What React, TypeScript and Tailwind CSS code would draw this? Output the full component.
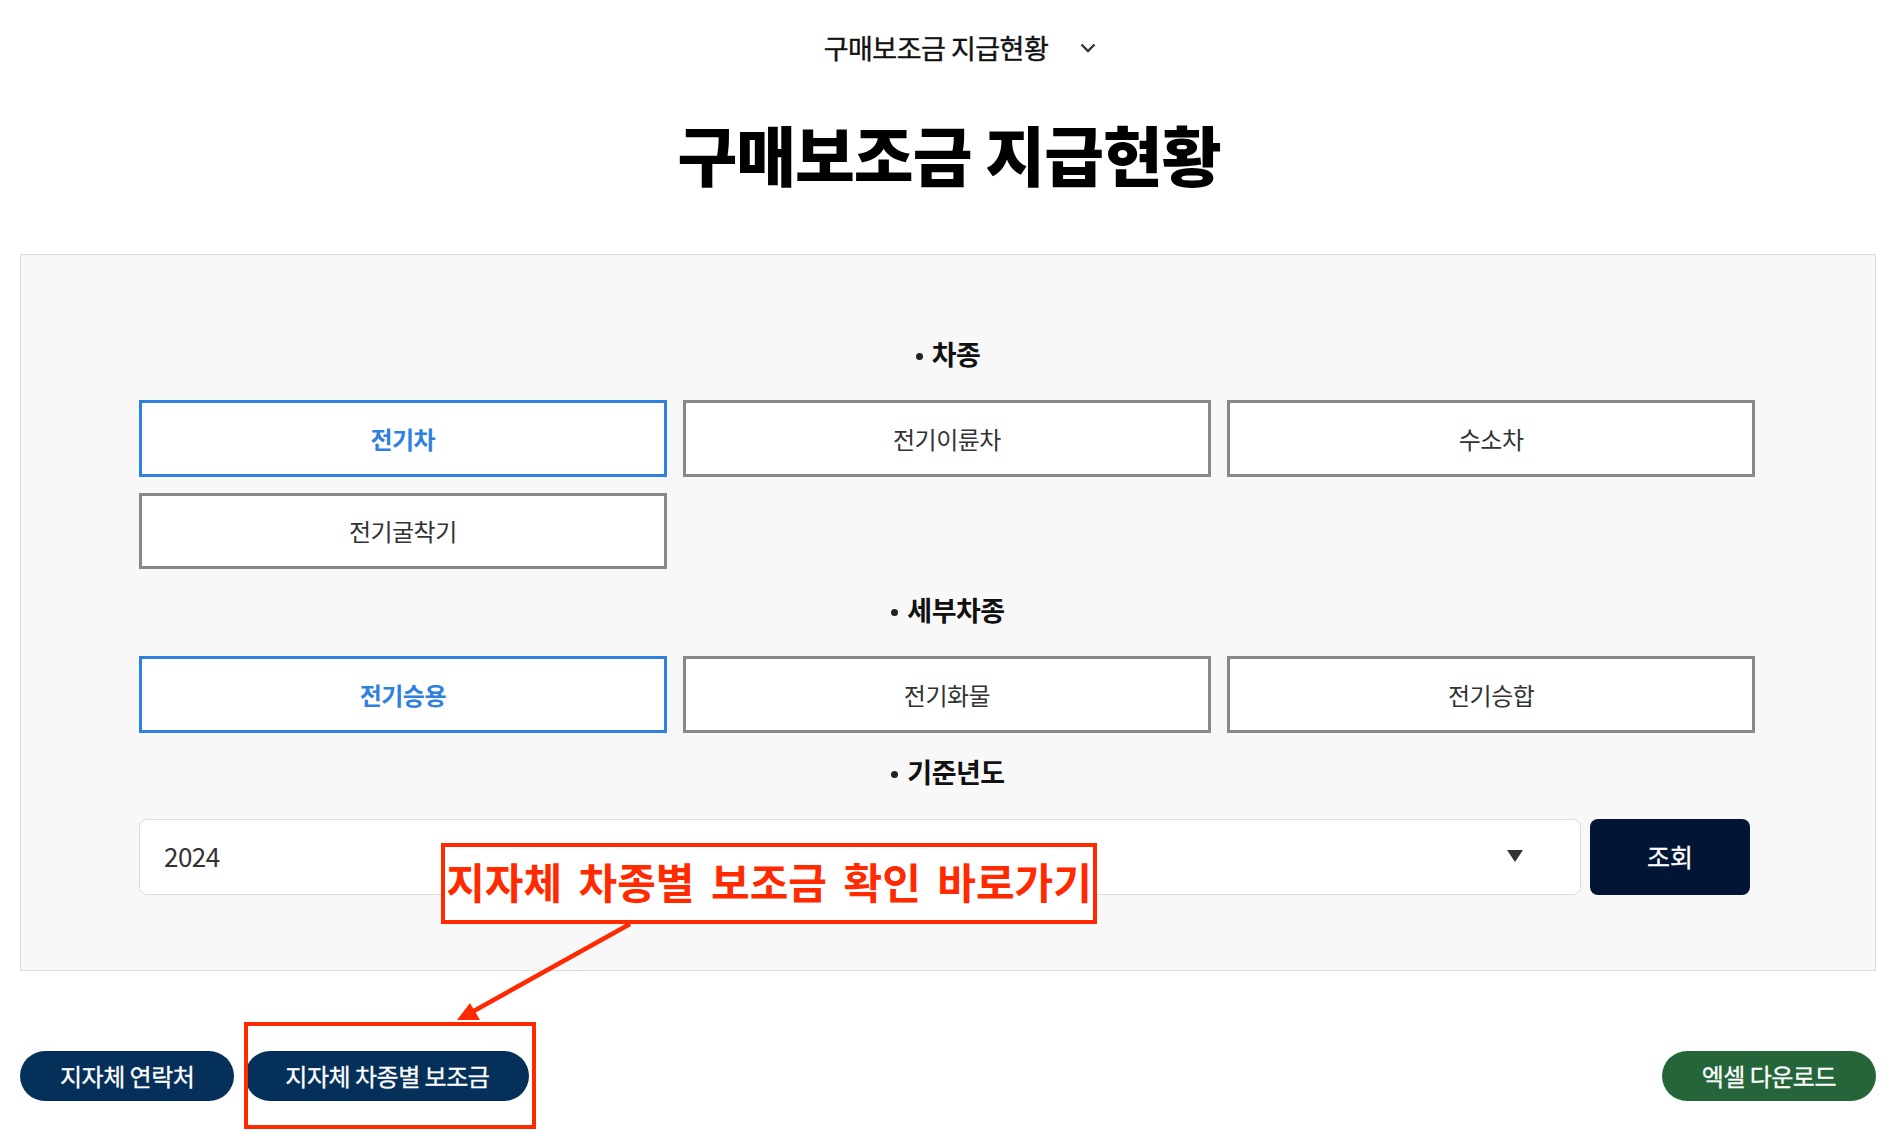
const kr = "font-['Noto_Sans_CJK_KR','Noto_Sans',sans-serif]";

const FilterButton = ({ label, active }: { label: string; active?: boolean }) => (
  <button
    className={
      active
        ? "h-[76.5px] border-[3px] border-[#2f80e0] bg-white pt-[1px] text-[24px] font-bold tracking-[-0.5px] text-[#2f80e0]"
        : "h-[76.5px] border-[3px] border-[#888888] bg-white pt-[1px] text-[24px] tracking-[-0.5px] text-[#333333]"
    }
  >
    {label}
  </button>
);

const SectionLabel = ({ label }: { label: string }) => (
  <div className="flex h-[40px] items-center justify-center gap-[9px] pl-[2px] text-[27px] font-bold tracking-[-0.5px] text-[#111111]">
    <span className="h-[7px] w-[7px] translate-y-[2px] rounded-full bg-[#222222]" />
    {label}
  </div>
);

const PillButton = ({ label, color }: { label: string; color: string }) => (
  <button
    className={`flex h-[50px] items-center justify-center rounded-full px-[40px] text-[24px] tracking-[-0.5px] text-white [-webkit-text-stroke:0.3px_currentColor] ${color}`}
  >
    {label}
  </button>
);

export default function App() {
  return (
    <div className={`relative h-[1144px] w-full overflow-hidden bg-white ${kr}`}>
      <div className="flex h-[96px] items-center justify-center gap-[32px] pl-[22px]">
        <span className="text-[27px] tracking-[-0.5px] text-[#111111] [-webkit-text-stroke:0.4px_currentColor]">구매보조금 지급현황</span>
        <svg width="16" height="10" viewBox="0 0 16 10" fill="none" stroke="#333333" strokeWidth="2.4">
          <path d="M1.5 1.5 8 8l6.5-6.5" />
        </svg>
      </div>

      <h1 className="flex h-[116px] items-center justify-center text-[65px] font-black tracking-[-1px] text-black">
        구매보조금 지급현황
      </h1>

      <div className="ml-[20px] mr-[22px] mt-[42px] border border-[#dddddd] bg-[#f8f8f8] pb-[75px] pl-[118px] pr-[120px] pt-[79px]">
        <SectionLabel label="차종" />
        <div className="mt-[26px] grid w-[1616px] grid-cols-3 gap-x-[16.5px] gap-y-[16px]">
          <FilterButton label="전기차" active />
          <FilterButton label="전기이륜차" />
          <FilterButton label="수소차" />
          <FilterButton label="전기굴착기" />
        </div>

        <div className="mt-[21px]">
          <SectionLabel label="세부차종" />
        </div>
        <div className="mt-[26px] grid w-[1616px] grid-cols-3 gap-x-[16.5px]">
          <FilterButton label="전기승용" active />
          <FilterButton label="전기화물" />
          <FilterButton label="전기승합" />
        </div>

        <div className="mt-[20px]">
          <SectionLabel label="기준년도" />
        </div>
        <div className="mt-[26px] flex gap-[9px]">
          <div className="flex h-[76px] w-[1442px] items-center justify-between rounded-[8px] border border-[#dddddd] bg-white pb-[2px] pl-[24px] pr-[57px] text-[26px] tracking-[-0.5px] text-[#333333]">
            2024
            <span className="h-0 w-0 border-x-[8px] border-t-[12px] border-x-transparent border-t-[#333333]" />
          </div>
          <button className="h-[76px] w-[160px] rounded-[8px] bg-[#021535] text-[25px] text-white [-webkit-text-stroke:0.3px_currentColor]">
            조회
          </button>
        </div>
      </div>

      <div className="ml-[20px] mr-[22px] mt-[80px] flex items-center gap-[11px]">
        <PillButton label="지자체 연락처" color="bg-[#04305a]" />
        <PillButton label="지자체 차종별 보조금" color="bg-[#04305a]" />
        <div className="ml-auto">
          <PillButton label="엑셀 다운로드" color="bg-[#24663a]" />
        </div>
      </div>

      {/* 빨간 안내 표시 */}
      <div className="absolute left-[441px] top-[843px] flex h-[81px] w-[656px] items-center justify-center whitespace-nowrap border-[4px] border-[#ff2a00] bg-white pb-[6px] text-[42px] font-bold text-[#ff2a00] [word-spacing:7px]">
        지자체 차종별 보조금 확인 바로가기
      </div>
      <div className="absolute left-[244px] top-[1022px] h-[107px] w-[292px] border-[4px] border-[#ff2a00]" />
      <svg className="absolute left-[450px] top-[920px]" width="190" height="105" viewBox="0 0 190 105" fill="none">
        <path d="M180 4 22 92" stroke="#ff2a00" strokeWidth="4.5" />
        <path d="M7 100 20 83 30 100Z" fill="#ff2a00" />
      </svg>
    </div>
  );
}
